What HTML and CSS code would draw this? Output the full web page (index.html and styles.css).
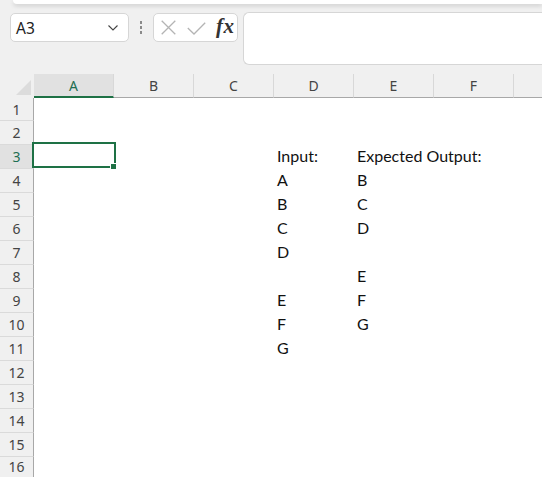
FILE: index.html
```html
<!DOCTYPE html>
<html>
<head>
<meta charset="utf-8">
<link rel="stylesheet" href="styles.css">
</head>
<body>
<div class="topbar"></div>
<div class="toolbar">
  <div class="namebox">
    <span class="ref">A3</span>
    <svg class="chev" width="10" height="6" viewBox="0 0 10 6"><path d="M0.5 0.5 L5 5 L9.5 0.5" fill="none" stroke="#444" stroke-width="1.1"/></svg>
  </div>
  <div class="grip"><span></span><span></span><span></span></div>
  <div class="fxbox">
    <svg class="ico" width="15" height="15" viewBox="0 0 15 15"><path d="M0.7 0.7 L14.3 14.3 M14.3 0.7 L0.7 14.3" fill="none" stroke="#b4b4b4" stroke-width="1.3"/></svg>
    <svg class="ico" width="19" height="13" viewBox="0 0 19 13"><path d="M0.8 6 L7 12 L18.2 0.8" fill="none" stroke="#b4b4b4" stroke-width="1.3"/></svg>
    <span class="fx">fx</span>
  </div>
  <div class="formula"></div>
</div>
<div class="sheet">
  <div class="hdr">
    <div class="corner"></div>
    <div class="ch sel-col">A</div>
    <div class="ch">B</div>
    <div class="ch">C</div>
    <div class="ch">D</div>
    <div class="ch">E</div>
    <div class="ch">F</div>
    <div class="ch"></div>
  </div>
  <div class="row first"><div class="rh">1</div></div>
  <div class="row"><div class="rh">2</div></div>
  <div class="row"><div class="rh sel-row">3</div><div class="c a"><div class="active"><span class="handle"></span></div></div><div class="c d">Input:</div><div class="c e">Expected Output:</div></div>
  <div class="row"><div class="rh">4</div><div class="c d">A</div><div class="c e">B</div></div>
  <div class="row"><div class="rh">5</div><div class="c d">B</div><div class="c e">C</div></div>
  <div class="row"><div class="rh">6</div><div class="c d">C</div><div class="c e">D</div></div>
  <div class="row"><div class="rh">7</div><div class="c d">D</div></div>
  <div class="row"><div class="rh">8</div><div class="c e">E</div></div>
  <div class="row"><div class="rh">9</div><div class="c d">E</div><div class="c e">F</div></div>
  <div class="row"><div class="rh">10</div><div class="c d">F</div><div class="c e">G</div></div>
  <div class="row"><div class="rh">11</div><div class="c d">G</div></div>
  <div class="row"><div class="rh">12</div></div>
  <div class="row"><div class="rh">13</div></div>
  <div class="row"><div class="rh">14</div></div>
  <div class="row"><div class="rh">15</div></div>
  <div class="row last"><div class="rh">16</div></div>
</div>
</body>
</html>
```

FILE: styles.css
```css
html, body {
  margin: 0;
  padding: 0;
  overflow: hidden;
}
body {
  background: #f0f0f0;
  width: 542px;
  height: 477px;
  font-family: "Noto Sans", "Open Sans", sans-serif;
}
.topbar {
  height: 4px;
  margin-left: 13px;
  background: #fff;
  border-bottom-left-radius: 8px;
  box-shadow: 0 2px 4px rgba(0, 0, 0, 0.14);
}
.toolbar {
  display: flex;
  align-items: flex-start;
  padding: 8px 0 0 10px;
  height: 53px;
}
.namebox {
  box-sizing: border-box;
  margin-top: 1px;
  width: 119px;
  height: 29px;
  background: #fff;
  border: 1px solid #d6d6d6;
  border-radius: 5px;
  display: flex;
  align-items: center;
  justify-content: space-between;
  padding: 0 10px 0 5px;
}
.ref {
  font-size: 15.5px;
  color: #222;
}
.chev {
  margin-top: 1px;
}
.grip {
  width: 24px;
  height: 29px;
  margin-top: 1px;
  display: flex;
  flex-direction: column;
  align-items: center;
  justify-content: center;
  gap: 2.5px;
}
.grip span {
  width: 2.5px;
  height: 2.5px;
  background: #8a8a8a;
}
.fxbox {
  box-sizing: border-box;
  margin-top: 1px;
  width: 85px;
  height: 29px;
  background: #fff;
  border: 1px solid #d6d6d6;
  border-radius: 5px;
  display: flex;
  align-items: center;
  padding: 0 0 0 7px;
  gap: 11px;
}
.fxbox .ico:nth-child(2) {
  margin-left: 0;
  margin-top: 2px;
}
.fx {
  font-family: "Liberation Serif", "DejaVu Serif", serif;
  font-style: italic;
  font-weight: bold;
  font-size: 21px;
  color: #333;
  margin-left: -1px;
  margin-top: -2px;
  letter-spacing: 0.5px;
}
.formula {
  box-sizing: border-box;
  margin-left: 5px;
  flex: 1;
  height: 53px;
  background: #fff;
  border: 1px solid #d6d6d6;
  border-right: none;
  border-radius: 6px 0 0 6px;
}
.sheet {
  margin-top: 9px;
  background: #fff;
}
.hdr, .row {
  display: grid;
  grid-template-columns: 34px repeat(7, 80px);
}
.hdr {
  height: 24px;
  background: #f0f0f0;
}
.corner {
  position: relative;
}
.corner::after {
  content: "";
  position: absolute;
  right: 3px;
  bottom: 3px;
  width: 15px;
  height: 15px;
  background: #dcdcdc;
  clip-path: polygon(100% 0, 100% 100%, 0 100%);
}
.ch {
  box-sizing: border-box;
  border-right: 1px solid #d8d8d8;
  border-bottom: 1px solid #a8a8a8;
  display: flex;
  align-items: center;
  justify-content: center;
  font-size: 14px;
  color: #444;
}
.ch.sel-col {
  background: #e1e1e1;
  border-bottom: 2px solid #1e7145;
  color: #1e6e52;
  padding-top: 1px;
}
.row {
  height: 24px;
}
.row.first {
  height: 23px;
}
.row.last {
  height: 20px;
}
.rh {
  box-sizing: border-box;
  background: #f0f0f0;
  border-right: 1px solid #a8a8a8;
  border-bottom: 1px solid #dadada;
  display: flex;
  align-items: center;
  justify-content: center;
  font-size: 14px;
  color: #444;
}
.row.last .rh {
  border-bottom: none;
  align-items: flex-start;
  padding-top: 0;
}
.rh.sel-row {
  background: #e1e1e1;
  color: #1e6e52;
}
.c {
  box-sizing: border-box;
  font-family: "Lato", "Open Sans", sans-serif;
  font-size: 16px;
  color: #111;
  padding-left: 3px;
  display: flex;
  align-items: flex-end;
  padding-bottom: 4px;
  white-space: nowrap;
}
.c.a { grid-column: 2; position: relative; }
.c.d { grid-column: 5; }
.c.e { grid-column: 6; }
.active {
  position: absolute;
  left: -2px;
  right: -2px;
  top: -3px;
  bottom: 1px;
  border: 2px solid #1e7145;
}
.handle {
  position: absolute;
  right: -3px;
  bottom: -4px;
  width: 5px;
  height: 5px;
  background: #1e7145;
  border: 1px solid #fff;
}
```
